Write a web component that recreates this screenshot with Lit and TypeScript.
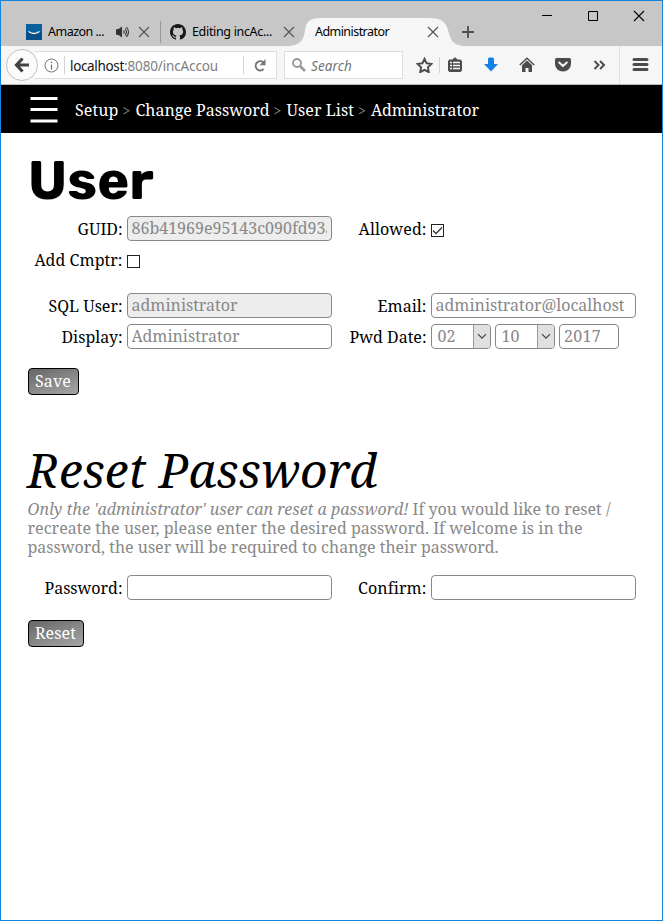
import { LitElement, html, css, svg, nothing } from "lit";
import { customElement, property } from "lit/decorators.js";

/** Single run of text whose tracking is adjusted to fill a set width. */
@customElement("fit-text")
class FitText extends LitElement {
  @property({ type: Number }) width = 0;
  @property() text = "";
  static styles = css`
    :host { display: inline-block; white-space: pre; }
    .run { display: inline-block; }
  `;
  render() {
    return html`<span class="run">${this.text}</span>`;
  }
  firstUpdated() {
    const run = this.renderRoot.querySelector(".run") as HTMLElement;
    const fit = () => {
      run.style.letterSpacing = "0px";
      const natural = run.getBoundingClientRect().width;
      const gap = (this.width - natural) / this.text.length;
      run.style.letterSpacing = gap + "px";
    };
    fit();
    document.fonts.ready.then(fit);
  }
}

const t = (text: string, width: number, cls = "") =>
  html`<fit-text class=${cls} .text=${text} .width=${width}></fit-text>`;

const cross = html`<svg class="x" width="12" height="12" viewBox="0 0 12 12">
  <path d="M1 1L11 11M11 1L1 11" fill="none" stroke="#555" stroke-width="1.2" /></svg>`;

const icons = {
  star: svg`<path d="M8.5 1.8l2.1 4.5 4.9.6-3.6 3.4.9 4.9-4.3-2.4-4.3 2.4.9-4.9L1.500 6.900l4.900-.6z" fill="none" stroke="#4c4c4c" stroke-width="1.900"/>`,
  list: svg`<path d="M2.500 2.500H5.500L7.500.500h1L10.500 2.500h3l1.500 1.500v9.500L13.500 15h-11L1 13.500v-9.500z" fill="#4c4c4c"/><path d="M3 5.500h2M6 5.500h7M3 8.500h2M6 8.500h7M3 11.500h2M6 11.500h7" stroke="#f6f6f6" stroke-width="1.500"/>`,
  down: svg`<path d="M5 2q0-1.500 1.500-1.500h3q1.500 0 1.500 1.500V7H15L8 14.500 1 7h4z" fill="#1682e8"/>`,
  home: svg`<path d="M.8 8L8 1.200 15.200 8" fill="none" stroke="#4c4c4c" stroke-width="1.500"/><path d="M3 8.300L8 3.500l5 4.800V15H9.500v-4h-3v4H3z" fill="#4c4c4c"/>`,
  pocket: svg`<path d="M1.500 1h13Q16 1 16 2.500V7a8 7.500 0 0 1-16 0V2.500Q0 1 1.500 1z" fill="#4c4c4c"/><path d="M4.200 5.500L8 9.100l3.800-3.600" fill="none" stroke="#f6f6f6" stroke-width="2" stroke-linecap="round" stroke-linejoin="round"/>`,
  more: svg`<path d="M3.500 4l4 4-4 4M9 4l4 4-4 4" fill="none" stroke="#4c4c4c" stroke-width="2"/>`,
  menu: svg`<path d="M2 2.500h13M2 7.500h13M2 12.500h13" stroke="#4c4c4c" stroke-width="3" stroke-linecap="round"/>`,
};
const tool = (name: keyof typeof icons) =>
  html`<span class="tool"><svg width="17" height="16" viewBox="0 0 17 16">${icons[name]}</svg></span>`;

const chevron = html`<span class="drop"><svg width="10" height="7" viewBox="0 0 10 7">
  <path d="M1 1.200L5 5.200 9 1.200" fill="none" stroke="#444" stroke-width="1.200" /></svg></span>`;

@customElement("app-root")
class AppRoot extends LitElement {
  static styles = css`
    :host { display: block; }
    * { box-sizing: border-box; }
    svg { display: block; flex: none; }
    .window { width: 663px; height: 921px; border: 1px solid #1883d7; background: #fff;
      display: flex; flex-direction: column; overflow: hidden;
      font: 16px/19px "Droid Serif", "Noto Serif", "DejaVu Serif Condensed", "DejaVu Serif", serif; }
    .tabs { height: 45px; background: #c7c7c7; display: flex; align-items: flex-end; flex: none;
      font: 12.5px/18px "Segoe UI", "Noto Sans", sans-serif; color: #000; }
    .tab { height: 28px; display: flex; align-items: center; flex: none; }
    .t1 { width: 159px; padding-left: 25px; }
    .t1 .label { width: 68px; margin-left: 6px; }
    .t1 .speaker { margin-left: -1px; margin-right: 8px; }
    .t2 { width: 140px; padding-left: 9px; border-left: 1px solid #999; height: 22px; margin-bottom: 3px; }
    .t2 .label { width: 91px; margin-left: 6px; }
    .t3 { position: relative; width: 163px; padding-left: 15px; }
    .t3 .shape { position: absolute; left: -11px; top: 0; }
    .t3 .label { position: relative; width: 112px; }
    .t3 .x { position: relative; }
    .plus { margin: 0 0 8px -1px; }
    .controls { margin-left: auto; align-self: flex-start; display: flex; gap: 34px; padding: 9px 17px 0 0; }
    .nav { height: 39px; background: #f6f6f6; border-bottom: 1px solid #bbb; display: flex; align-items: center;
      flex: none; font: 13.500px/20px "Segoe UI", "Noto Sans", sans-serif; color: #111; }
    .back { width: 32px; height: 32px; border-radius: 50%; border: 1px solid #c2c2c2; background: #fbfbfb;
      margin-left: 5px; display: grid; place-items: center; flex: none; z-index: 1; }
    .url { height: 28px; width: 242px; margin-left: -3px; padding-left: 9px; border: 1px solid #dedede; border-left: 0;
      background: #fff; display: flex; align-items: center; flex: none; }
    .sep { width: 1px; height: 18px; background: #d3d3d3; flex: none; }
    .sep.first { margin-left: 5px; }
    .address { width: 178px; padding-left: 5px; margin-top: 2px; }
    .grey { color: #808080; }
    .reload { margin-left: 10px; }
    .search { height: 28px; width: 119px; border: 1px solid #dedede; background: #fff; margin-left: 7px;
      display: flex; align-items: center; gap: 5px; padding-left: 7px; font-style: italic; color: #737373; flex: none; }
    .search .word { margin-top: 2px; }
    .tools { display: flex; align-items: center; flex: 1; padding-left: 13px; }
    .tool { width: 36px; display: flex; flex: none; }
    .tools .sep { height: 16px; margin-left: -13px; margin-right: 7px; }
    .tools .sep.tall { height: 38px; margin: 0 12px 0 -8px; background: #e0e0e0; }
    .crumbs { height: 48px; background: #000; color: #fff; display: flex; align-items: center; flex: none; padding-left: 29px; }
    .burger { margin-right: 17px; }
    .trail { display: flex; padding-top: 2px; }
    .arrow { color: #888; width: 17px; padding-left: 4px; font-size: 14px; }
    .page { padding: 0 26px; flex: 1; }
    h1 { margin: 0; padding: 18px 0 0 1px; height: 82px; font: 700 54px/60px Rubik, Inter, sans-serif; }
    h2 { margin: 0; height: 73px; padding-top: 13px; font-size: 48px; line-height: 60px; font-weight: 400; font-style: italic;
      margin-top: 32px; }
    .row { display: flex; height: 31px; padding-top: 1px; }
    .caption { width: 95.500px; margin-right: 4.500px; text-align: right; padding-top: 4px; flex: none; height: 25px; color: #000; }
    .field + .caption { width: 94.500px; }
    .field { width: 205px; height: 25px; border: 1px solid #888; border-radius: 4px; padding: 2px 4px; color: #888;
      flex: none; background: #fff; overflow: hidden; display: flex; }
    .field .clip { overflow: hidden; width: 195px; margin-left: -0.500px; }
    .off { background: #ededed; }
    .box { width: 13px; height: 13px; border: 1px solid #222; margin-top: 8px; background: #fff; display: grid; place-items: center; flex: none; }
    .dates { display: flex; gap: 4px; }
    .small { width: 60px; }
    .select { padding: 2px 0 0 5.500px; justify-content: space-between; }
    .drop { width: 17px; height: 23px; margin-top: -2px; background: #e0e0e0; border-left: 1px solid #999;
      display: grid; place-items: center; flex: none; }
    .gap { height: 15px; }
    .button { display: block; margin: 14px 0 0 1px; height: 27px; padding: 3px 6px; border: 1px solid #000; border-radius: 4px;
      background: linear-gradient(160deg, #666, #a6a6a6); color: #fff; font: inherit; text-align: left; }
    .save { width: 51px; }
    .reset { width: 56px; margin-top: 15px; }
    .note { margin: 0 0 17px; color: #888; height: 57px; }
    .line { display: flex; gap: 4px; padding-left: 0.500px; }
    em { font-style: italic; }
  `;

  field(text: string, width: number, off = false) {
    return html`<div class="field ${off ? "off" : ""}"><div class="clip">${text ? t(text, width) : nothing}</div></div>`;
  }
  caption(text: string, width: number) {
    return html`<div class="caption">${t(text, width)}</div>`;
  }

  render() {
    return html`<div class="window">
      <div class="tabs">
        <div class="tab t1">
          <svg width="16" height="16" viewBox="0 0 16 16"><rect width="16" height="16" fill="#07619f" /><path d="M0 8h16v8H0z" fill="#074f86"/><path d="M2.500 7.500Q8 11.500 13.500 7.500" fill="none" stroke="#fff" stroke-width="1.500" /></svg>
          <span class="label">${t("Amazon ...", 56)}</span>
          <svg class="speaker" width="15" height="14" viewBox="0 0 15 14"><path d="M1 5q0-1 1-1h1.500L7 1.500V12.500L3.500 10H2q-1 0-1-1z" fill="#333" /><path d="M8.500 5.300q1.500 1.700 0 3.400M10 3.500q3 3.500 0 7M11.500 2q4 5 0 10" fill="none" stroke="#333" stroke-width="1.100"/></svg>
          ${cross}
        </div>
        <div class="tab t2">
          <svg width="16" height="16" viewBox="0 0 16 16"><path fill="#181818" d="M8 0C3.580 0 0 3.580 0 8c0 3.540 2.290 6.530 5.470 7.590.4.070.55-.17.55-.38 0-.19-.01-.82-.01-1.490-2.010.37-2.530-.49-2.690-.94-.09-.23-.48-.94-.82-1.130-.28-.15-.68-.52-.01-.53.63-.01 1.080.58 1.230.82.72 1.210 1.870.87 2.330.66.07-.52.28-.87.51-1.070-1.780-.2-3.640-.89-3.640-3.950 0-.87.31-1.590.82-2.150-.08-.2-.36-1.020.08-2.120 0 0 .67-.21 2.200.82a7.700 7.700 0 0 1 4 0c1.530-1.040 2.200-.82 2.200-.82.44 1.100.16 1.920.08 2.120.51.56.82 1.270.82 2.150 0 3.070-1.870 3.750-3.650 3.950.29.25.54.73.54 1.480 0 1.070-.01 1.930-.01 2.200 0 .21.15.46.55.38A8 8 0 0 0 16 8c0-4.420-3.580-8-8-8z" /></svg>
          <span class="label">${t("Editing incAc...", 80)}</span>
          ${cross}
        </div>
        <div class="tab t3">
          <svg class="shape" width="174" height="28" viewBox="0 0 174 28"><path d="M0 28C13 27 15 20 16 12C17 4 21 0 31 0H141C152 0 157 4 159 12C161 20 163 27 174 28z" fill="#f6f6f6" /></svg>
          <span class="label">${t("Administrator", 74)}</span>
          ${cross}
        </div>
        <svg class="plus" width="12" height="12" viewBox="0 0 12 12"><path d="M6 0v12M0 6h12" stroke="#4c4c4c" stroke-width="1.800" /></svg>
        <div class="controls">
          <svg width="12" height="12" viewBox="0 0 12 12"><path d="M1 5.500h10" stroke="#000" /></svg>
          <svg width="12" height="12" viewBox="0 0 12 12"><path d="M1.500 1.500h9v9h-9z" fill="none" stroke="#000" /></svg>
          <svg width="12" height="12" viewBox="0 0 12 12"><path d="M1 1L11 11M11 1L1 11" stroke="#000" stroke-width="1.100" /></svg>
        </div>
      </div>
      <div class="nav">
        <div class="back"><svg width="16" height="16" viewBox="0 0 16 16"><path d="M8.500 1.500L2.500 8l6 6.500M3 8h12" fill="none" stroke="#444" stroke-width="3.200" /></svg></div>
        <div class="url">
          <svg width="15" height="15" viewBox="0 0 15 15"><circle cx="7.500" cy="7.500" r="6.500" fill="none" stroke="#777" /><path d="M7.500 6.500v5M7.500 3.500v1.600" stroke="#777" stroke-width="1.300" /></svg>
          <span class="sep first"></span>
          <span class="address">${t("localhost", 54)}${t(":8080/incAccou", 94, "grey")}</span>
          <span class="sep"></span>
          <svg class="reload" width="13" height="13" viewBox="0 0 13 13"><path d="M9.300 3.300A4.600 4.600 0 1 0 9.600 10" fill="none" stroke="#777" stroke-width="2" /><path d="M11.500 0v6.200H5.500z" fill="#777" /></svg>
        </div>
        <div class="search">
          <svg width="14" height="14" viewBox="0 0 14 14"><circle cx="5" cy="5" r="4" fill="none" stroke="#999" stroke-width="1.900" /><path d="M8 8l5 5" stroke="#999" stroke-width="2.600" /></svg>
          <span class="word">${t("Search", 41)}</span>
        </div>
        <div class="tools">
          ${tool("star")}<span class="sep"></span>${tool("list")}${tool("down")}${tool("home")}${tool("pocket")}${tool("more")}<span class="sep tall"></span>${tool("menu")}
        </div>
      </div>
      <div class="crumbs">
        <svg class="burger" width="28" height="28" viewBox="0 0 28 28"><path d="M.5 3.500h27M.5 14.500h27M.5 26h27" stroke="#fff" stroke-width="2.800" /></svg>
        <div class="trail">
          ${t("Setup", 43.5)}<span class="arrow">&gt;</span>${t("Change Password", 134)}<span class="arrow">&gt;</span>${t("User List", 67.5)}<span class="arrow">&gt;</span>${t("Administrator", 108)}
        </div>
      </div>
      <div class="page">
        <h1>${t("User", 126)}</h1>
        <div class="row">${this.caption("GUID:", 45)}${this.field("86b41969e95143c090fd93a", 203, true)}${this.caption("Allowed:", 68)}
          <div class="box"><svg width="11" height="11" viewBox="0 0 11 11"><path d="M1 5.500L4 8.500 10 2.500" fill="none" stroke="#333" stroke-width="1.300" /></svg></div></div>
        <div class="row">${this.caption("Add Cmptr:", 88)}<div class="box"></div></div>
        <div class="gap"></div>
        <div class="row">${this.caption("SQL User:", 74)}${this.field("administrator", 106, true)}${this.caption("Email:", 49)}${this.field("administrator@localhost", 189)}</div>
        <div class="row">${this.caption("Display:", 61)}${this.field("Administrator", 108)}${this.caption("Pwd Date:", 77)}
          <div class="dates">
            <div class="field small select">${t("02", 18)}${chevron}</div>
            <div class="field small select">${t("10", 18)}${chevron}</div>
            <div class="field small">${t("2017", 37)}</div>
          </div></div>
        <button class="button save">${t("Save", 36)}</button>
        <h2>${t("Reset Password", 350)}</h2>
        <div class="note">
          <div class="line"><em>${t("Only the 'administrator' user can reset a password!", 381)}</em>${t("If you would like to reset /", 198)}</div>
          <div class="line">${t("recreate the user, please enter the desired password. If welcome is in the", 555)}</div>
          <div class="line">${t("password, the user will be required to change their password.", 471)}</div>
        </div>
        <div class="row">${this.caption("Password:", 78)}${this.field("", 0)}${this.caption("Confirm:", 68)}${this.field("", 0)}</div>
        <button class="button reset">${t("Reset", 41)}</button>
      </div>
    </div>`;
  }
}
